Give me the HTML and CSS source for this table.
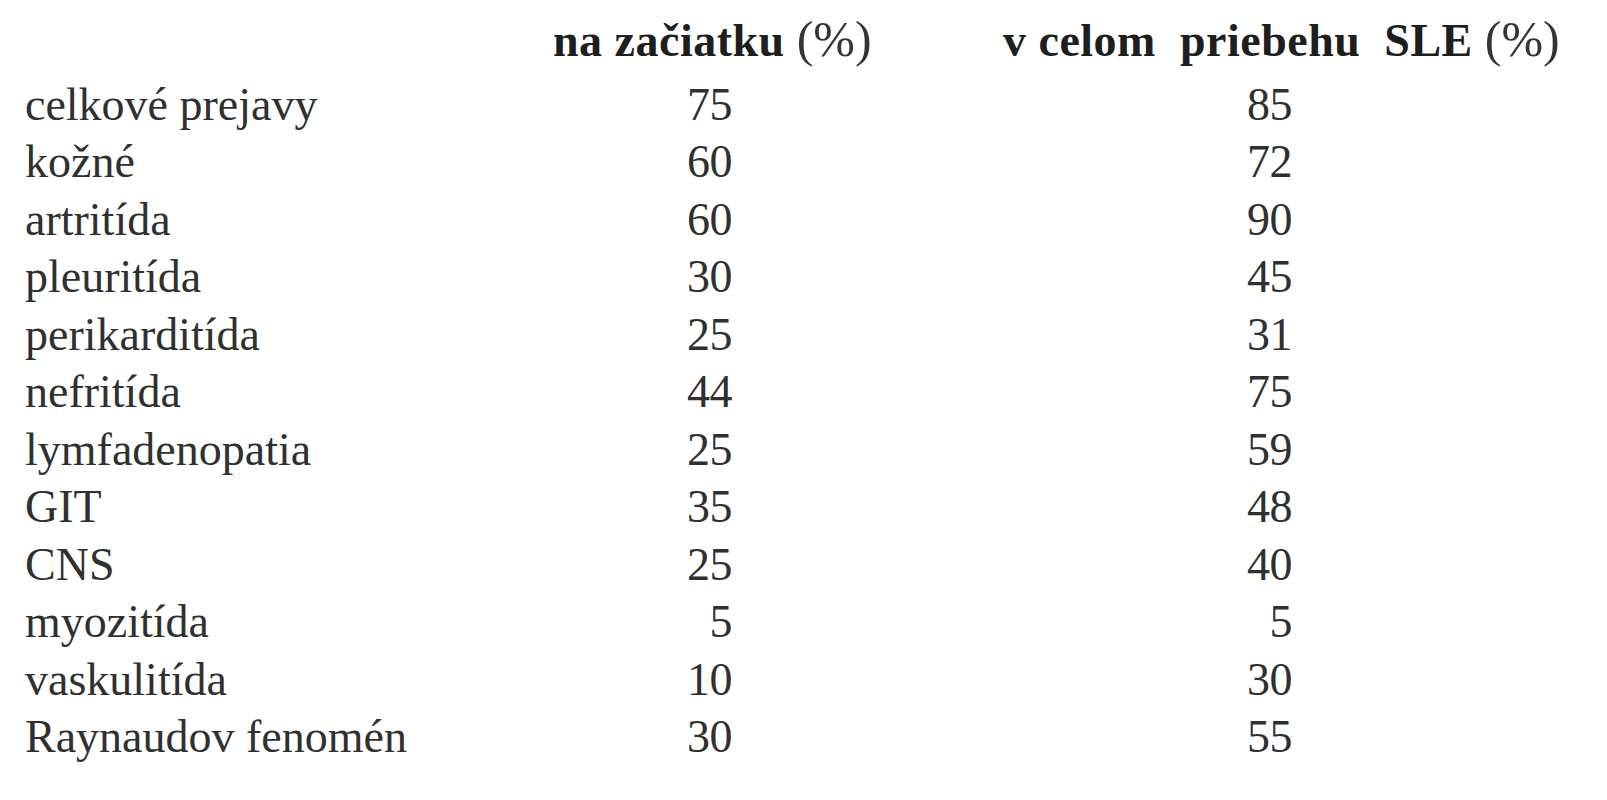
FILE: index.html
```html
<!DOCTYPE html>
<html lang="sk">
<head>
<meta charset="utf-8">
<title>Prejavy SLE</title>
<link rel="stylesheet" href="styles.css">
</head>
<body>
<div class="table">
  <div class="head"></div>
  <div class="head h1">na začiatku <span class="pct">(%)</span></div>
  <div class="head h2">v celom  priebehu  SLE <span class="pct">(%)</span></div>

  <div class="label">celkové prejavy</div><div class="n1">75</div><div class="n2">85</div>
  <div class="label">kožné</div><div class="n1">60</div><div class="n2">72</div>
  <div class="label">artritída</div><div class="n1">60</div><div class="n2">90</div>
  <div class="label">pleuritída</div><div class="n1">30</div><div class="n2">45</div>
  <div class="label">perikarditída</div><div class="n1">25</div><div class="n2">31</div>
  <div class="label">nefritída</div><div class="n1">44</div><div class="n2">75</div>
  <div class="label">lymfadenopatia</div><div class="n1">25</div><div class="n2">59</div>
  <div class="label">GIT</div><div class="n1">35</div><div class="n2">48</div>
  <div class="label">CNS</div><div class="n1">25</div><div class="n2">40</div>
  <div class="label">myozitída</div><div class="n1">5</div><div class="n2">5</div>
  <div class="label">vaskulitída</div><div class="n1">10</div><div class="n2">30</div>
  <div class="label">Raynaudov fenomén</div><div class="n1">30</div><div class="n2">55</div>
</div>
</body>
</html>
```

FILE: styles.css
```css
html, body {
  margin: 0;
  padding: 0;
  background: #ffffff;
}

body {
  font-family: "Liberation Serif", "Times New Roman", serif;
  font-size: 46px;
  color: #303030;
}

.table {
  display: grid;
  grid-template-columns: 528px 450px 1fr;
  grid-template-rows: 65px;
  grid-auto-rows: 57.5px;
  padding: 10.7px 0 0 25px;
  line-height: 57.5px;
}

.head {
  font-weight: bold;
  color: #1e1e1e;
  white-space: pre;
  letter-spacing: 0.5px;
  line-height: 57.5px;
}

.pct {
  font-weight: normal;
  font-size: 50px;
  letter-spacing: 0;
  color: #353535;
}

.label {
  white-space: nowrap;
}

.n1 {
  text-align: right;
  padding-right: 271px;
  letter-spacing: -0.5px;
}

.n2 {
  width: 289px;
  text-align: right;
  letter-spacing: -0.5px;
}
```
